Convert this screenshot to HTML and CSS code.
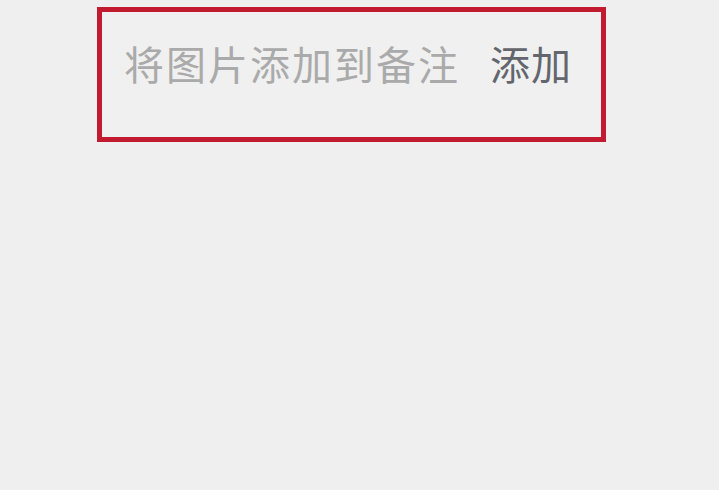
FILE: index.html
```html
<!DOCTYPE html>
<html lang="zh">
<head>
<meta charset="utf-8">
<link rel="stylesheet" href="styles.css">
</head>
<body>
<div class="page">
  <div class="note-box">
    <span class="hint">将图片添加到备注</span>
    <span class="action">添加</span>
  </div>
</div>
</body>
</html>
```
FILE: styles.css
```css
html, body {
  margin: 0;
  padding: 0;
  background: #efefef;
}
.page {
  width: 719px;
  height: 490px;
  padding: 7px 0 0 97px;
  box-sizing: border-box;
  font-family: "Noto Sans CJK SC", "Noto Sans", sans-serif;
}
.note-box {
  width: 509px;
  height: 135px;
  box-sizing: border-box;
  border: 5px solid #c21a2f;
  background: #f0f0f0;
  display: flex;
  align-items: center;
  padding: 0 0 23px 22px;
  gap: 30px;
}
.hint {
  font-size: 40px;
  letter-spacing: 2px;
  color: #aaaaaa;
  line-height: 1;
}
.action {
  font-size: 40px;
  letter-spacing: 1px;
  color: #63666d;
  line-height: 1;
}
```
